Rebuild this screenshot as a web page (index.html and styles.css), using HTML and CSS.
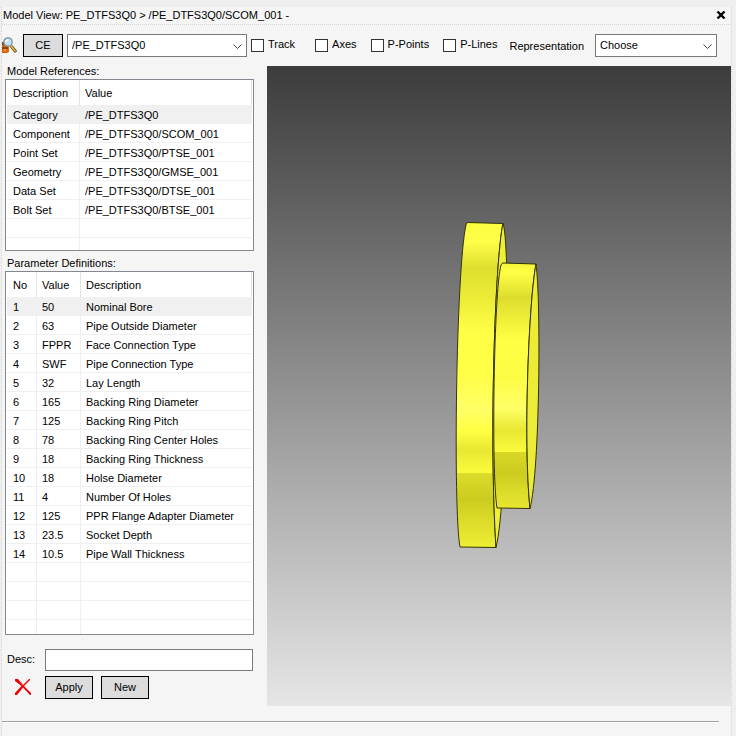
FILE: index.html
```html
<!DOCTYPE html>
<html lang="en">
<head>
<meta charset="utf-8">
<title>Model View</title>
<link rel="stylesheet" href="styles.css">
</head>
<body>
<div class="window">
  <header class="titlebar">
    <h1>Model View: PE_DTFS3Q0 &gt; /PE_DTFS3Q0/SCOM_001 -</h1>
    <button class="close" type="button" aria-label="Close">
      <svg width="10" height="8" viewBox="0 0 10 8"><path d="M1.5 0.5 L8.5 7.5 M8.5 0.5 L1.5 7.5" stroke="#000" stroke-width="2.3"/></svg>
    </button>
  </header>

  <div class="toolbar">
    <svg class="find" width="15" height="17" viewBox="0 0 15 17">
      <path d="M0 5H7V15L5 16H0Z" fill="#d8660c"/>
      <path d="M0 5H5V8H0Z" fill="#7a4a20"/>
      <path d="M0 11H6" stroke="#4a2408" stroke-width="1"/>
      <path d="M2 13H4" stroke="#ffd9a0" stroke-width="1"/>
      <path d="M9 9L14 15" stroke="#5b4a20" stroke-width="3"/>
      <path d="M9 9L13.500 14.500" stroke="#e6b844" stroke-width="1.500"/>
      <circle cx="6" cy="5" r="4.200" fill="#c4e2f4" stroke="#7890a0" stroke-width="1.300"/>
      <path d="M4 5Q4 3 6 3" stroke="#fff" stroke-width="1.500" fill="none"/>
    </svg>
    <button class="btn btn-ce" type="button">CE</button>
    <div class="combo combo-element">
      <select aria-label="Element"><option>/PE_DTFS3Q0</option></select>
      <svg width="9" height="6" viewBox="0 0 9 6"><path d="M0.500 0.500L4.500 4.500L8.500 0.500"/></svg>
    </div>
    <div class="checks">
      <label><input type="checkbox">Track</label>
      <label><input type="checkbox">Axes</label>
      <label><input type="checkbox">P-Points</label>
      <label><input type="checkbox">P-Lines</label>
    </div>
    <label class="rep-label" for="rep">Representation</label>
    <div class="combo combo-rep">
      <select id="rep"><option>Choose</option></select>
      <svg width="9" height="6" viewBox="0 0 9 6"><path d="M0.500 0.500L4.500 4.500L8.500 0.500"/></svg>
    </div>
  </div>

  <main class="content">
    <section class="side">
      <h2>Model References:</h2>
      <div class="list">
        <table class="refs">
          <thead><tr><th>Description</th><th>Value</th></tr></thead>
          <tbody>
            <tr class="selected"><td>Category</td><td>/PE_DTFS3Q0</td></tr>
            <tr><td>Component</td><td>/PE_DTFS3Q0/SCOM_001</td></tr>
            <tr><td>Point Set</td><td>/PE_DTFS3Q0/PTSE_001</td></tr>
            <tr><td>Geometry</td><td>/PE_DTFS3Q0/GMSE_001</td></tr>
            <tr><td>Data Set</td><td>/PE_DTFS3Q0/DTSE_001</td></tr>
            <tr><td>Bolt Set</td><td>/PE_DTFS3Q0/BTSE_001</td></tr>
            <tr><td></td><td></td></tr>
            <tr class="tail"><td></td><td></td></tr>
          </tbody>
        </table>
      </div>
      <h2>Parameter Definitions:</h2>
      <div class="list">
        <table class="params">
          <thead><tr><th>No</th><th>Value</th><th>Description</th></tr></thead>
          <tbody>
            <tr class="selected"><td>1</td><td>50</td><td>Nominal Bore</td></tr>
            <tr><td>2</td><td>63</td><td>Pipe Outside Diameter</td></tr>
            <tr><td>3</td><td>FPPR</td><td>Face Connection Type</td></tr>
            <tr><td>4</td><td>SWF</td><td>Pipe Connection Type</td></tr>
            <tr><td>5</td><td>32</td><td>Lay Length</td></tr>
            <tr><td>6</td><td>165</td><td>Backing Ring Diameter</td></tr>
            <tr><td>7</td><td>125</td><td>Backing Ring Pitch</td></tr>
            <tr><td>8</td><td>78</td><td>Backing Ring Center Holes</td></tr>
            <tr><td>9</td><td>18</td><td>Backing Ring Thickness</td></tr>
            <tr><td>10</td><td>18</td><td>Holse Diameter</td></tr>
            <tr><td>11</td><td>4</td><td>Number Of Holes</td></tr>
            <tr><td>12</td><td>125</td><td>PPR Flange Adapter Diameter</td></tr>
            <tr><td>13</td><td>23.5</td><td>Socket Depth</td></tr>
            <tr><td>14</td><td>10.5</td><td>Pipe Wall Thickness</td></tr>
            <tr><td></td><td></td><td></td></tr>
            <tr><td></td><td></td><td></td></tr>
            <tr><td></td><td></td><td></td></tr>
            <tr class="tail"><td></td><td></td><td></td></tr>
          </tbody>
        </table>
      </div>
      <div class="desc">
        <label for="desc">Desc:</label>
        <input id="desc" type="text">
      </div>
      <div class="actions">
        <button class="delete" type="button" aria-label="Delete">
          <svg width="16" height="16" viewBox="0 0 16 16"><path d="M0 0H3L8 6L14 0H15V1L9 7L16 14V16H15L8 8.500L2 16H0V14L6.500 7L0 2Z" fill="#f00000"/></svg>
        </button>
        <button class="btn" type="button">Apply</button>
        <button class="btn" type="button">New</button>
      </div>
    </section>

    <section class="view" aria-label="3D view">
      <svg viewBox="267 66 464 640" role="img" aria-label="Flange model">
        <defs>
          <linearGradient id="ring" gradientUnits="userSpaceOnUse" x1="0" y1="222" x2="0" y2="548">
            <stop offset="0" stop-color="#fbfb3e"/>
            <stop offset=".06" stop-color="#ffff4a"/>
            <stop offset=".14" stop-color="#dede2e"/>
            <stop offset=".22" stop-color="#eaea36"/>
            <stop offset=".34" stop-color="#ffff46"/>
            <stop offset=".46" stop-color="#ffff46"/>
            <stop offset=".58" stop-color="#ffff66"/>
            <stop offset=".64" stop-color="#ffff42"/>
            <stop offset=".7" stop-color="#e8e832"/>
            <stop offset=".769" stop-color="#fbfb3c"/>
            <stop offset=".77" stop-color="#dcdc2c"/>
            <stop offset=".85" stop-color="#cccc20"/>
            <stop offset="1" stop-color="#efef34"/>
          </linearGradient>
          <linearGradient id="hub" gradientUnits="userSpaceOnUse" x1="0" y1="263" x2="0" y2="509">
            <stop offset="0" stop-color="#f4f438"/>
            <stop offset=".04" stop-color="#ffff46"/>
            <stop offset=".14" stop-color="#dcdc2c"/>
            <stop offset=".24" stop-color="#f2f23a"/>
            <stop offset=".32" stop-color="#ffff44"/>
            <stop offset=".46" stop-color="#fcfc44"/>
            <stop offset=".59" stop-color="#ffff66"/>
            <stop offset=".68" stop-color="#e8e832"/>
            <stop offset=".769" stop-color="#fbfb3c"/>
            <stop offset=".77" stop-color="#d8d828"/>
            <stop offset=".85" stop-color="#cccc20"/>
            <stop offset="1" stop-color="#e8e832"/>
          </linearGradient>
        </defs>
        <g stroke="#34340c" stroke-width="1" stroke-linejoin="round">
          <path fill="url(#ring)" d="M468 222.500L503 223.500C495 260 489 440 496 547.500L460 547C453 510 456 270 466 225Q466 222.500 468 222.500Z"/>
          <path fill="#efef38" d="M503 223.500C511 245 508 500 496 547.500C489 440 495 260 503 223.500Z"/>
          <path fill="url(#hub)" d="M503 263L536 264C529 300 523 440 530 508.500L497 508C491 470 494 290 501 265Q502 263 503 263Z"/>
          <path fill="#ecec36" d="M536 264C541 300 540 470 530 508.500C523 440 529 300 536 264Z"/>
        </g>
      </svg>
    </section>
  </main>
  <hr>
</div>
</body>
</html>
```
FILE: styles.css
```css
* { box-sizing: border-box; }

body {
  margin: 0;
  background: #efefef;
  color: #000;
  font: 11px/14px "Liberation Sans", Arial, sans-serif;
}

button, input, select { font: inherit; color: inherit; margin: 0; }
h1, h2 { margin: 0; font: inherit; }
svg { display: block; }

.window {
  display: flex;
  flex-direction: column;
  min-height: calc(100vh - 7px);
  margin: 7px 4px 0 1px;
  background: #f5f5f5;
  border: 1px dotted #d4d4d4;
  border-width: 0 1px;
}

.titlebar {
  display: flex;
  align-items: center;
  justify-content: space-between;
  height: 18px;
  padding: 0 5px 2px 1px;
  border-bottom: 1px dotted #d4d4d4;
}
.close { padding: 1px 0 0; border: 0; background: none; }

.toolbar {
  display: flex;
  align-items: center;
  height: 41px;
  padding-right: 14px;
}
.find { margin-right: 6px; }

.btn {
  width: 48px;
  height: 23px;
  padding: 0 0 1px;
  border: 1px solid #000;
  background: #dcdcdc;
}
.btn-ce { width: 40px; }

.combo {
  position: relative;
  height: 23px;
  border: 1px solid #7a7a7a;
  background: #fff;
}
.combo select {
  display: block;
  width: 100%;
  height: 19px;
  padding: 0 4px;
  border: 0;
  background: none;
  appearance: none;
}
.combo svg { position: absolute; right: 4px; top: 9px; pointer-events: none; }
.combo path { fill: none; stroke: #444; }
.combo-element { width: 180px; margin: 0 4px; }
.combo-rep { width: 122px; margin-left: auto; }

.checks { display: flex; padding-bottom: 2px; }
.checks label { display: flex; gap: 4px; margin-right: 14px; }
.checks label:first-child { margin-right: 20px; }
.checks label:last-child { margin-right: 12px; }
.checks input {
  appearance: none;
  width: 13px;
  height: 13px;
  margin-top: 2px;
  border: 1px solid #333;
  background: #fff;
}
.checks input:checked { background: #333; }

.content {
  display: grid;
  grid-template-columns: 252px 1fr;
  column-gap: 13px;
}

.side { padding: 0 0 7px 3px; }
.side h2 { height: 13px; padding-left: 2px; line-height: 10px; }
.list + h2 { height: 20px; padding-top: 7px; }

.list {
  padding: 0 1px;
  border: 1px solid #828790;
  background: #fff;
}
.list table {
  width: 100%;
  table-layout: fixed;
  border-collapse: separate;
  border-spacing: 0;
}
.list th, .list td {
  padding: 0 0 0 5px;
  border-right: 1px solid #efefef;
  text-align: left;
  font-weight: normal;
  white-space: nowrap;
}
.list th { height: 25px; border-color: #e2e2e2; }
.list td { height: 19px; padding-top: 2px; border-bottom: 1px solid #efefef; }
.list th:first-child, .list td:first-child { padding-left: 6px; }
.list td:last-child { border-right: 0; }
.list .tail td { height: 12px; border-bottom: 0; }
.list .params .tail td { height: 14px; }
.list .selected td { background: #f0f0f0; }
.refs th:first-child { width: 73px; }
.params th:first-child { width: 30px; }
.params th:nth-child(2) { width: 44px; }

.desc { display: flex; align-items: center; margin-top: 14px; padding: 0 1px 0 2px; }
.desc label { width: 38px; padding-bottom: 2px; }
.desc input {
  flex: 1;
  min-width: 0;
  height: 22px;
  border: 1px solid #7a7a7a;
  background: #fff;
}
.actions { display: flex; align-items: center; gap: 8px; margin-top: 5px; padding-left: 8px; }
.delete { width: 24px; padding: 0 0 2px 2px; border: 0; background: none; }

.view {
  position: relative;
  background: linear-gradient(#3c3c3c, #e6e6e6);
}
.view svg { position: absolute; inset: 0; width: 100%; height: 100%; }

hr {
  width: calc(100% - 12px);
  margin: 15px 12px 0 0;
  border: 0;
  border-top: 1px solid #a0a0a0;
  border-bottom: 1px solid #fff;
}
```
